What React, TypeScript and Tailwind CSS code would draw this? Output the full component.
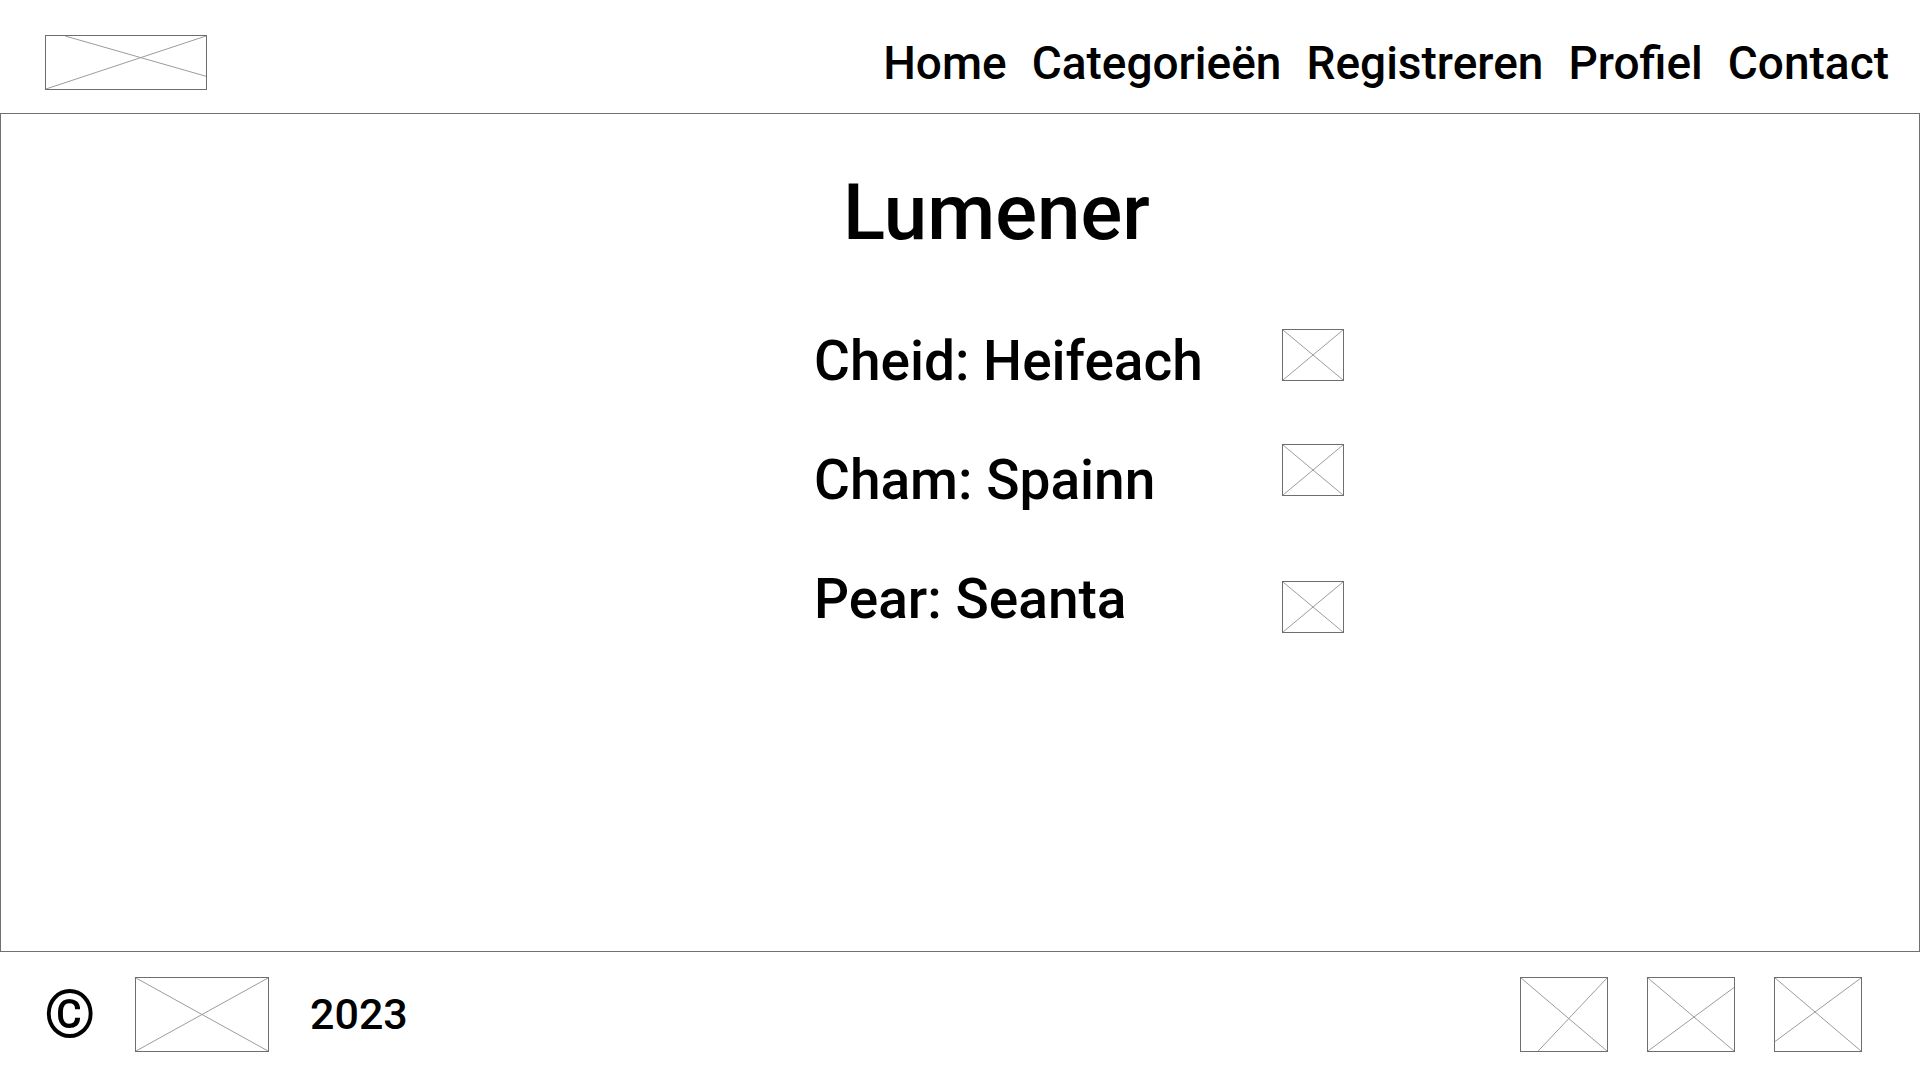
import React from "react";

type Line = [number, number, number, number];

const X: Line[] = [
  [0, 0, 100, 100],
  [100, 0, 0, 100],
];

function Placeholder({ className, lines = X }: { className: string; lines?: Line[] }) {
  return (
    <div className={`relative shrink-0 border border-[#6e6e6e] bg-white ${className}`}>
      <svg className="absolute inset-0 h-full w-full" viewBox="0 0 100 100" preserveAspectRatio="none">
        {lines.map(([x1, y1, x2, y2], i) => (
          <line
            key={i}
            x1={x1}
            y1={y1}
            x2={x2}
            y2={y2}
            stroke="#9c9c9c"
            strokeWidth="1"
            vectorEffect="non-scaling-stroke"
          />
        ))}
      </svg>
    </div>
  );
}

const navItems = ["Home", "Categorieën", "Registreren", "Profiel", "Contact"];

const rows = [
  { label: "Cheid: Heifeach", rowMt: "mt-[78px]", textMt: "mt-[4px]", boxMt: "mt-0" },
  { label: "Cham: Spainn", rowMt: "mt-[55px]", textMt: "mt-[8px]", boxMt: "mt-0" },
  { label: "Pear: Seanta", rowMt: "mt-[63px]", textMt: "mt-0", boxMt: "mt-[10px]" },
];

export default function App() {
  return (
    <div className="min-h-screen w-full bg-white font-[Roboto,sans-serif] text-black">
      {/* header */}
      <header className="flex h-[113px] items-start justify-between pl-[45px] pr-[31px]">
        <Placeholder
          className="mt-[35px] h-[55px] w-[162px]"
          lines={[
            [12, 0, 100, 76],
            [0, 100, 100, 0],
          ]}
        />
        <nav className="mt-[40px] flex gap-[25px] text-[46px] font-medium leading-[46px]">
          {navItems.map((item) => (
            <a key={item} href="#" className="whitespace-nowrap">
              {item}
            </a>
          ))}
        </nav>
      </header>

      {/* main */}
      <main className="h-[839px] border border-[#707070]">
        <div className="flex flex-col pl-[813px] pt-[61px]">
          <h1 className="ml-[29px] text-[78px] font-medium leading-[76px]">Lumener</h1>
          {rows.map((r) => (
            <div key={r.label} className={`flex items-start ${r.rowMt}`}>
              <p className={`w-[468px] text-[55px] font-medium leading-[56px] ${r.textMt}`}>{r.label}</p>
              <Placeholder className={`h-[52px] w-[62px] ${r.boxMt}`} />
            </div>
          ))}
        </div>
      </main>

      {/* footer */}
      <footer className="flex h-[128px] items-center justify-between pb-[3px] pl-[44px] pr-[58px]">
        <div className="flex items-center">
          <span className="w-[68px] text-[66px] font-bold leading-none">©</span>
          <Placeholder className="ml-[23px] h-[75px] w-[134px]" />
          <span className="ml-[41px] text-[43px] font-medium leading-none">2023</span>
        </div>
        <div className="flex items-center gap-[39px]">
          <Placeholder
            className="h-[75px] w-[88px]"
            lines={[
              [0, 0, 100, 100],
              [100, 0, 20, 100],
            ]}
          />
          <Placeholder
            className="h-[75px] w-[88px]"
            lines={[
              [0, 0, 100, 100],
              [100, 13, 0, 100],
            ]}
          />
          <Placeholder
            className="h-[75px] w-[88px]"
            lines={[
              [0, 0, 100, 100],
              [100, 0, 0, 87],
            ]}
          />
        </div>
      </footer>
    </div>
  );
}
